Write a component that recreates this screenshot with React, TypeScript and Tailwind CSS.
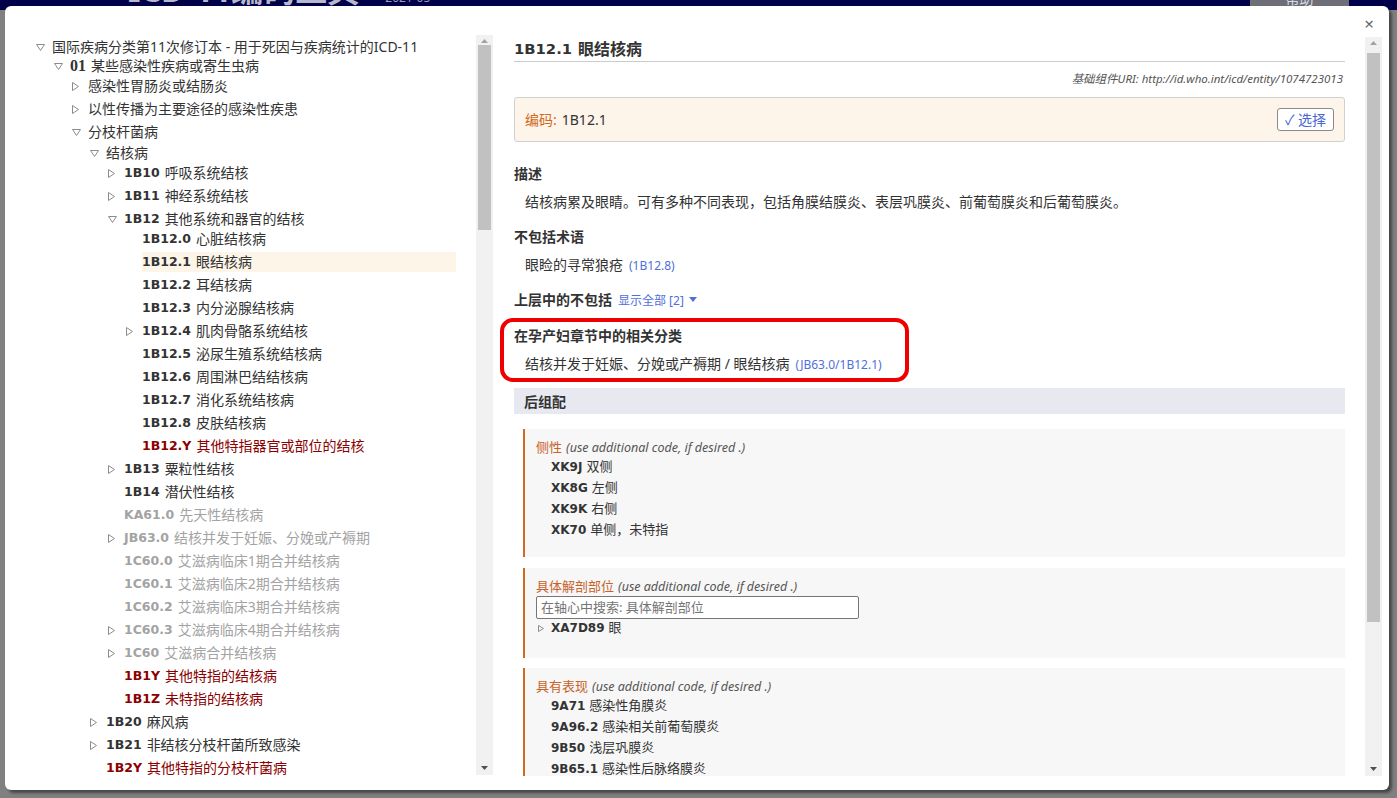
import React from 'react';

type Row = {
  l: number;
  t?: 'o' | 'c';
  code?: string;
  chap?: string;
  text: string;
  tone?: 'n' | 'r' | 'g';
  sel?: boolean;
  h: number;
};

const rows: Row[] = [
  { l: 0, t: 'o', text: '国际疾病分类第11次修订本 - 用于死因与疾病统计的ICD-11', h: 19 },
  { l: 1, t: 'o', chap: '01', text: '某些感染性疾病或寄生虫病', h: 20 },
  { l: 2, t: 'c', text: '感染性胃肠炎或结肠炎', h: 23 },
  { l: 2, t: 'c', text: '以性传播为主要途径的感染性疾患', h: 23 },
  { l: 2, t: 'o', text: '分枝杆菌病', h: 21 },
  { l: 3, t: 'o', text: '结核病', h: 20 },
  { l: 4, t: 'c', code: '1B10', text: '呼吸系统结核', h: 23 },
  { l: 4, t: 'c', code: '1B11', text: '神经系统结核', h: 23 },
  { l: 4, t: 'o', code: '1B12', text: '其他系统和器官的结核', h: 20 },
  { l: 5, code: '1B12.0', text: '心脏结核病', h: 23 },
  { l: 5, code: '1B12.1', text: '眼结核病', h: 23, sel: true },
  { l: 5, code: '1B12.2', text: '耳结核病', h: 23 },
  { l: 5, code: '1B12.3', text: '内分泌腺结核病', h: 23 },
  { l: 5, t: 'c', code: '1B12.4', text: '肌肉骨骼系统结核', h: 23 },
  { l: 5, code: '1B12.5', text: '泌尿生殖系统结核病', h: 23 },
  { l: 5, code: '1B12.6', text: '周围淋巴结结核病', h: 23 },
  { l: 5, code: '1B12.7', text: '消化系统结核病', h: 23 },
  { l: 5, code: '1B12.8', text: '皮肤结核病', h: 23 },
  { l: 5, code: '1B12.Y', text: '其他特指器官或部位的结核', h: 23, tone: 'r' },
  { l: 4, t: 'c', code: '1B13', text: '粟粒性结核', h: 23 },
  { l: 4, code: '1B14', text: '潜伏性结核', h: 23 },
  { l: 4, code: 'KA61.0', text: '先天性结核病', h: 23, tone: 'g' },
  { l: 4, t: 'c', code: 'JB63.0', text: '结核并发于妊娠、分娩或产褥期', h: 23, tone: 'g' },
  { l: 4, code: '1C60.0', text: '艾滋病临床1期合并结核病', h: 23, tone: 'g' },
  { l: 4, code: '1C60.1', text: '艾滋病临床2期合并结核病', h: 23, tone: 'g' },
  { l: 4, code: '1C60.2', text: '艾滋病临床3期合并结核病', h: 23, tone: 'g' },
  { l: 4, t: 'c', code: '1C60.3', text: '艾滋病临床4期合并结核病', h: 23, tone: 'g' },
  { l: 4, t: 'c', code: '1C60', text: '艾滋病合并结核病', h: 23, tone: 'g' },
  { l: 4, code: '1B1Y', text: '其他特指的结核病', h: 23, tone: 'r' },
  { l: 4, code: '1B1Z', text: '未特指的结核病', h: 23, tone: 'r' },
  { l: 3, t: 'c', code: '1B20', text: '麻风病', h: 23 },
  { l: 3, t: 'c', code: '1B21', text: '非结核分枝杆菌所致感染', h: 23 },
  { l: 3, code: '1B2Y', text: '其他特指的分枝杆菌病', h: 23, tone: 'r' },
];

const OpenTri = () => (
  <svg width="9" height="7" viewBox="0 0 9 7" className="block">
    <polygon points="0.5,0.5 8.5,0.5 4.5,6.5" fill="none" stroke="#8c8c8c" strokeWidth="1" />
  </svg>
);
const ClosedTri = () => (
  <svg width="7" height="9" viewBox="0 0 7 9" className="block">
    <polygon points="0.5,0.5 6.5,4.5 0.5,8.5" fill="none" stroke="#8c8c8c" strokeWidth="1" />
  </svg>
);

function TreeRow({ r }: { r: Row }) {
  const color = r.tone === 'r' ? 'text-[#8b0000]' : r.tone === 'g' ? 'text-[#a3a3a3]' : 'text-[#333333]';
  return (
    <div className="flex items-start" style={{ height: r.h, paddingLeft: 16 + 18 * r.l }}>
      <div className="w-[16px] h-[20px] flex items-center shrink-0">
        {r.t === 'o' ? <OpenTri /> : r.t === 'c' ? <ClosedTri /> : null}
      </div>
      <div
        className={`flex-1 h-[20px] flex items-center whitespace-nowrap text-[14px] leading-[20px] ${color} ${
          r.sel ? 'bg-[#fdf5e8]' : ''
        }`}
      >
        {r.chap && (
          <span className="font-['Liberation_Serif',serif] font-bold text-[16px] mr-[5px]">{r.chap}</span>
        )}
        {r.code && (
          <span className="font-['DejaVu_Sans',sans-serif] font-bold text-[12.5px] mr-[5px]">{r.code}</span>
        )}
        <span>{r.text}</span>
      </div>
    </div>
  );
}

function ScrollBar({ thumbTop, thumbH, upLight }: { thumbTop: number; thumbH: number; upLight?: boolean }) {
  return (
    <div className="w-[17px] h-full bg-[#f1f1f1] flex flex-col items-center shrink-0">
      <div className="h-[10px] w-full flex items-center justify-center pt-[2px]">
        <svg width="7" height="4" viewBox="0 0 7 4">
          <polygon points="0,4 7,4 3.5,0" fill={upLight ? '#a3a3a3' : '#505050'} />
        </svg>
      </div>
      <div style={{ height: thumbTop }} />
      <div className="w-[13px] bg-[#c1c1c1]" style={{ height: thumbH }} />
      <div className="flex-1" />
      <div className="h-[14px] w-full flex items-center justify-center">
        <svg width="7" height="4" viewBox="0 0 7 4">
          <polygon points="0,0 7,0 3.5,4" fill="#505050" />
        </svg>
      </div>
    </div>
  );
}

const Link = ({ children }: { children: React.ReactNode }) => (
  <span className="text-[12px] text-[#4f6fdc]">{children}</span>
);

function Axis({
  label,
  children,
  h,
}: {
  label: string;
  children: React.ReactNode;
  h: number;
}) {
  return (
    <div className="ml-[9px] bg-[#f7f7f7] border-l-2 border-[#d2691e] pl-[11px] pt-[11px]" style={{ height: h }}>
      <div className="h-[16px] flex items-center whitespace-nowrap">
        <span className="text-[13px] text-[#c8622a]">{label}</span>
        <span className="ml-[4px] text-[12.5px] italic text-[#555555] font-['Noto_Sans',sans-serif]">
          (use additional code, if desired .)
        </span>
      </div>
      {children}
    </div>
  );
}

const AxisItem = ({ code, text }: { code: string; text: string }) => (
  <div className="h-[21px] flex items-center pl-[15px] text-[13px] text-[#333333] whitespace-nowrap">
    <span className="font-['DejaVu_Sans',sans-serif] font-bold text-[12px] mr-[4px]">{code}</span>
    <span>{text}</span>
  </div>
);

export default function App() {
  return (
    <div className="relative w-[1397px] h-[798px] overflow-hidden bg-[#808080] font-['Noto_Sans','Noto_Sans_CJK_SC',sans-serif]">
      {/* page header behind the overlay */}
      <div className="h-[10px] bg-[#00004a] flex items-start overflow-hidden">
        <div className="ml-[128px] -mt-[26px] text-[32px] leading-[32px] font-bold text-[#b8b8cc] whitespace-nowrap">
          ICD-11编码工具
        </div>
        <div className="ml-[26px] -mt-[9px] text-[12px] leading-[14px] text-[#9a9ab0]">2021-05</div>
        <div className="ml-auto mr-[48px] w-[99px] h-[10px] bg-[#6e6e78] flex justify-center">
          <span className="-mt-[9px] text-[14px] leading-[16px] text-[#d8d8e0]">帮助</span>
        </div>
      </div>

      {/* modal */}
      <div className="absolute left-[5px] top-[6px] w-[1384px] h-[784px] bg-white rounded-[6px] shadow-[3px_3px_3px_rgba(0,0,0,0.45)]">
        <div className="absolute right-[15px] top-[8px] text-[17px] leading-[20px] text-[#666666]">×</div>

        <div className="flex pt-[29px] pl-[15px]">
          {/* left tree pane */}
          <div className="flex w-[473px] h-[740px] overflow-hidden">
            <div className="flex-1 pt-[2px] pr-[20px] overflow-hidden">
              {rows.map((r, i) => (
                <TreeRow key={i} r={r} />
              ))}
            </div>
            <ScrollBar thumbTop={0} thumbH={185} upLight />
          </div>

          {/* right detail pane */}
          <div className="ml-[7px] mt-[2px] flex w-[882px] h-[739px] overflow-hidden">
            <div className="w-[831px] ml-[14px] overflow-hidden text-[#333333]">
              <div className="h-[25px] border-b border-[#cccccc] flex items-start">
                <div className="h-[24px] flex items-center whitespace-nowrap">
                  <span className="font-['DejaVu_Sans',sans-serif] font-bold text-[14.8px] mr-[6px]">1B12.1</span>
                  <span className="font-bold text-[16px]">眼结核病</span>
                </div>
              </div>
              <div className="mt-[9px] h-[16px] flex items-center justify-end pr-[2px] text-[11.5px] italic text-[#555555] whitespace-nowrap">
                基础组件URI: http://id.who.int/icd/entity/1074723013
              </div>
              <div className="mt-[10px] h-[45px] bg-[#fdf5e9] border border-[#d0d0d0] rounded-[3px] flex items-center justify-between pl-[10px] pr-[10px]">
                <div className="text-[14px] whitespace-nowrap">
                  <span className="text-[#d2691e]">编码:</span>
                  <span className="ml-[5px] text-[#333333]">1B12.1</span>
                </div>
                <div className="w-[57px] h-[23px] mt-[-1px] bg-white border border-[#8a8a8a] rounded-[3px] flex items-center justify-center text-[14px] text-[#4a67d6] whitespace-nowrap">
                  ✓ 选择
                </div>
              </div>

              <div className="mt-[21px] h-[20px] flex items-center text-[14px] font-bold">描述</div>
              <div className="mt-[8px] h-[20px] flex items-center pl-[11px] text-[14px] whitespace-nowrap">
                结核病累及眼睛。可有多种不同表现，包括角膜结膜炎、表层巩膜炎、前葡萄膜炎和后葡萄膜炎。
              </div>

              <div className="mt-[15px] h-[20px] flex items-center text-[14px] font-bold">不包括术语</div>
              <div className="mt-[8px] h-[20px] flex items-center pl-[11px] text-[14px] whitespace-nowrap">
                <span>眼睑的寻常狼疮</span>
                <span className="ml-[6px]">
                  <Link>(1B12.8)</Link>
                </span>
              </div>

              <div className="mt-[15px] h-[20px] flex items-center text-[14px] whitespace-nowrap">
                <span className="font-bold">上层中的不包括</span>
                <span className="ml-[6px]">
                  <Link>显示全部 [2]</Link>
                </span>
                <svg width="8" height="5" viewBox="0 0 8 5" className="ml-[5px]">
                  <polygon points="0,0 8,0 4,5" fill="#4f6fdc" />
                </svg>
              </div>

              <div className="mt-[16px] h-[20px] flex items-center text-[14px] font-bold">在孕产妇章节中的相关分类</div>
              <div className="mt-[8px] h-[20px] flex items-center pl-[11px] text-[14px] whitespace-nowrap">
                <span>结核并发于妊娠、分娩或产褥期 / 眼结核病</span>
                <span className="ml-[6px]">
                  <Link>(JB63.0/1B12.1)</Link>
                </span>
              </div>

              <div className="mt-[15px] h-[26px] bg-[#e8e8f0] flex items-center pl-[10px] text-[14px] font-bold">
                后组配
              </div>

              <div className="mt-[15px]">
                <Axis label="侧性" h={128}>
                  <AxisItem code="XK9J" text="双侧" />
                  <AxisItem code="XK8G" text="左侧" />
                  <AxisItem code="XK9K" text="右侧" />
                  <AxisItem code="XK70" text="单侧，未特指" />
                </Axis>
              </div>
              <div className="mt-[11px]">
                <Axis label="具体解剖部位" h={90}>
                  <div className="mt-[1px] w-[323px] h-[23px] border border-[#767676] rounded-[2px] bg-white flex items-center pl-[4px] text-[13px] text-[#757575] whitespace-nowrap">
                    在轴心中搜索: 具体解剖部位
                  </div>
                  <div className="h-[18px] flex items-center text-[13px] whitespace-nowrap">
                    <div className="w-[15px] pl-[2px] flex items-center">
                      <svg width="6" height="7" viewBox="0 0 6 7" className="block">
                        <polygon points="0.5,0.5 5.5,3.5 0.5,6.5" fill="none" stroke="#8c8c8c" strokeWidth="1" />
                      </svg>
                    </div>
                    <span className="font-['DejaVu_Sans',sans-serif] font-bold text-[12px] mr-[4px]">XA7D89</span>
                    <span>眼</span>
                  </div>
                </Axis>
              </div>
              <div className="mt-[10px]">
                <Axis label="具有表现" h={140}>
                  <AxisItem code="9A71" text="感染性角膜炎" />
                  <AxisItem code="9A96.2" text="感染相关前葡萄膜炎" />
                  <AxisItem code="9B50" text="浅层巩膜炎" />
                  <AxisItem code="9B65.1" text="感染性后脉络膜炎" />
                </Axis>
              </div>
            </div>
            <div className="ml-[20px]">
              <ScrollBar thumbTop={6} thumbH={569} upLight />
            </div>
          </div>
        </div>

        {/* red annotation highlighting the related classification */}
        <div className="absolute left-[495px] top-[312px] w-[409px] h-[64px] border-4 border-[#ee0000] rounded-[13px]" />
      </div>
    </div>
  );
}
